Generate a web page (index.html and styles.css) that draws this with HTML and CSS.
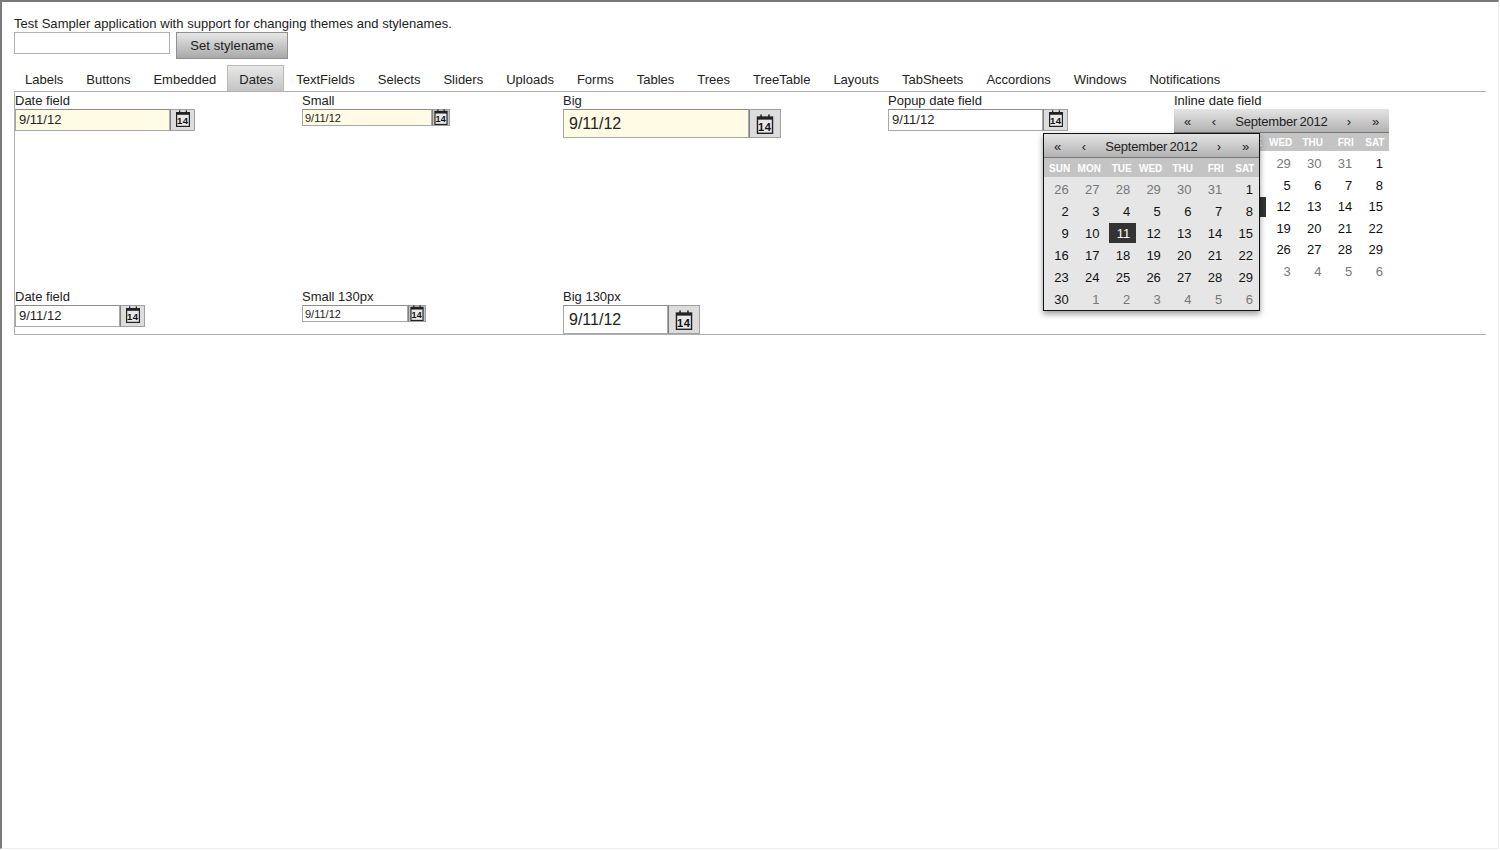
FILE: index.html
```html
<!DOCTYPE html>
<html lang="en">
<head>
    <meta charset="UTF-8">
    <meta name="viewport" content="width=device-width, initial-scale=1.0">
    <title>Test Sampler</title>
    <link rel="stylesheet" href="styles.css">
</head>
<body>
    <!-- Calendar icon, reused by every date field -->
    <svg class="icon-defs">
        <symbol id="cal" viewBox="0 0 16 17">
            <rect x="1.6" y="2.6" width="12.8" height="13.8" fill="#e8e8e8" stroke="#222" stroke-width="1.2"/>
            <rect x="1.6" y="2.6" width="12.8" height="2.2" fill="#222"/>
            <rect x="4" y="0.4" width="1.3" height="3.4" fill="#222"/>
            <rect x="10.7" y="0.4" width="1.3" height="3.4" fill="#222"/>
            <text x="7.8" y="14.3" class="icon-num">14</text>
        </symbol>
    </svg>

    <div class="frame">
        <p class="intro">Test Sampler application with support for changing themes and stylenames.</p>
        <div class="stylename-row">
            <input type="text" class="stylename-input">
            <button class="stylename-btn">Set stylename</button>
        </div>

        <!-- Tabs -->
        <nav class="tabs">
            <span class="tab">Labels</span>
            <span class="tab">Buttons</span>
            <span class="tab">Embedded</span>
            <span class="tab active">Dates</span>
            <span class="tab">TextFields</span>
            <span class="tab">Selects</span>
            <span class="tab">Sliders</span>
            <span class="tab">Uploads</span>
            <span class="tab">Forms</span>
            <span class="tab">Tables</span>
            <span class="tab">Trees</span>
            <span class="tab">TreeTable</span>
            <span class="tab">Layouts</span>
            <span class="tab">TabSheets</span>
            <span class="tab">Accordions</span>
            <span class="tab">Windows</span>
            <span class="tab">Notifications</span>
        </nav>

        <main class="panel">
            <div class="cell">
                <label class="caption">Date field</label>
                <div class="datefield w180 focused">
                    <input type="text" value="9/11/12">
                    <button><svg class="cal"><use href="#cal"/></svg></button>
                </div>
            </div>
            <div class="cell">
                <label class="caption">Small</label>
                <div class="datefield small w148 focused">
                    <input type="text" value="9/11/12">
                    <button><svg class="cal"><use href="#cal"/></svg></button>
                </div>
            </div>
            <div class="cell">
                <label class="caption">Big</label>
                <div class="datefield big w218 focused">
                    <input type="text" value="9/11/12">
                    <button><svg class="cal"><use href="#cal"/></svg></button>
                </div>
            </div>
            <div class="cell">
                <label class="caption">Popup date field</label>
                <div class="datefield w180">
                    <input type="text" value="9/11/12">
                    <button><svg class="cal"><use href="#cal"/></svg></button>
                </div>
            </div>
            <div class="cell">
                <label class="caption">Inline date field</label>
                <div class="calendar inline">
                    <div class="cal-head"><span>«</span><span>‹</span><span class="cal-title">September 2012</span><span>›</span><span>»</span></div>
                    <div class="cal-week"><span>SUN</span><span>MON</span><span>TUE</span><span>WED</span><span>THU</span><span>FRI</span><span>SAT</span></div>
                    <div class="cal-days">
                        <span class="off">26</span><span class="off">27</span><span class="off">28</span><span class="off">29</span><span class="off">30</span><span class="off">31</span><span>1</span>
                        <span>2</span><span>3</span><span>4</span><span>5</span><span>6</span><span>7</span><span>8</span>
                        <span>9</span><span>10</span><span class="sel">11</span><span>12</span><span>13</span><span>14</span><span>15</span>
                        <span>16</span><span>17</span><span>18</span><span>19</span><span>20</span><span>21</span><span>22</span>
                        <span>23</span><span>24</span><span>25</span><span>26</span><span>27</span><span>28</span><span>29</span>
                        <span>30</span><span class="off">1</span><span class="off">2</span><span class="off">3</span><span class="off">4</span><span class="off">5</span><span class="off">6</span>
                    </div>
                </div>
            </div>

            <div class="cell">
                <label class="caption">Date field</label>
                <div class="datefield w130">
                    <input type="text" value="9/11/12">
                    <button><svg class="cal"><use href="#cal"/></svg></button>
                </div>
            </div>
            <div class="cell">
                <label class="caption">Small 130px</label>
                <div class="datefield small w124">
                    <input type="text" value="9/11/12">
                    <button><svg class="cal"><use href="#cal"/></svg></button>
                </div>
            </div>
            <div class="cell">
                <label class="caption">Big 130px</label>
                <div class="datefield big w137">
                    <input type="text" value="9/11/12">
                    <button><svg class="cal"><use href="#cal"/></svg></button>
                </div>
            </div>

            <!-- Open popup of the popup date field -->
            <div class="calendar popup">
                <div class="cal-head"><span>«</span><span>‹</span><span class="cal-title">September 2012</span><span>›</span><span>»</span></div>
                <div class="cal-week"><span>SUN</span><span>MON</span><span>TUE</span><span>WED</span><span>THU</span><span>FRI</span><span>SAT</span></div>
                <div class="cal-days">
                    <span class="off">26</span><span class="off">27</span><span class="off">28</span><span class="off">29</span><span class="off">30</span><span class="off">31</span><span>1</span>
                    <span>2</span><span>3</span><span>4</span><span>5</span><span>6</span><span>7</span><span>8</span>
                    <span>9</span><span>10</span><span class="sel">11</span><span>12</span><span>13</span><span>14</span><span>15</span>
                    <span>16</span><span>17</span><span>18</span><span>19</span><span>20</span><span>21</span><span>22</span>
                    <span>23</span><span>24</span><span>25</span><span>26</span><span>27</span><span>28</span><span>29</span>
                    <span>30</span><span class="off">1</span><span class="off">2</span><span class="off">3</span><span class="off">4</span><span class="off">5</span><span class="off">6</span>
                </div>
            </div>
        </main>
    </div>
</body>
</html>
```

FILE: styles.css
```css
/* Global Styles */
html, body {
    margin: 0;
    padding: 0;
    background-color: #fff;
}

body {
    font-family: "Liberation Sans", Arial, sans-serif;
    font-size: 13px;
    color: #222;
    overflow: hidden;
}

input, button {
    font-family: inherit;
    box-sizing: border-box;
    margin: 0;
}

.icon-defs {
    display: none;
}

.icon-num {
    font-family: "Liberation Sans", Arial, sans-serif;
    font-size: 9.5px;
    font-weight: bold;
    letter-spacing: 0.4px;
    text-anchor: middle;
    fill: #111;
}

/* Window frame */
.frame {
    box-sizing: border-box;
    width: 1499px;
    height: 849px;
    border-top: 2px solid #7a7a7a;
    border-left: 2px solid #7a7a7a;
    border-right: 1px solid #eee;
    border-bottom: 1px solid #eee;
    padding: 14px 12px 0;
}

.intro {
    margin: 0;
    height: 16px;
    line-height: 15px;
    letter-spacing: 0.04px;
}

/* Stylename row */
.stylename-row {
    display: flex;
    align-items: flex-start;
    gap: 6px;
    height: 33px;
}

.stylename-input {
    width: 156px;
    height: 22px;
    border: 1px solid #b0b0b0;
    background-color: #fff;
}

.stylename-btn {
    width: 112px;
    height: 27px;
    padding: 0;
    font-size: 13px;
    letter-spacing: 0.1px;
    color: #222;
    border: 1px solid #909090;
    background: linear-gradient(#e6e6e6, #a9a9a9);
}

/* Tabs */
.tabs {
    display: flex;
    height: 26px;
    width: 1472px;
    border-bottom: 1px solid #b0b0b0;
}

.tab {
    padding: 0 10px 0 11px;
    line-height: 28px;
    border: 1px solid transparent;
    border-bottom: none;
    white-space: nowrap;
}

.tab:first-child {
    margin-left: -1px;
}

.tab.active {
    border-color: #b8b8b8;
    background: linear-gradient(#e8e8e8, #c4c4c4);
}

/* Tab content */
.panel {
    position: relative;
    box-sizing: border-box;
    width: 1472px;
    height: 243px;
    border-left: 1px solid #b0b0b0;
    border-bottom: 1px solid #b0b0b0;
    padding-top: 2px;
    display: grid;
    grid-template-columns: 287px 261px 325px 286px 1fr;
    grid-template-rows: 196px auto;
}

.caption {
    display: block;
    height: 15px;
    line-height: 14px;
}

/* Date field */
.datefield {
    display: flex;
    height: 22px;
}

.datefield input {
    flex: 1;
    min-width: 0;
    height: 100%;
    padding: 0 3px 2px;
    font-size: 13px;
    color: #222;
    background-color: #fff;
    border: 1px solid #a8a8a8;
    border-top-color: #8c8c8c;
    border-radius: 0;
    outline: none;
}

.datefield button {
    display: flex;
    align-items: flex-start;
    justify-content: center;
    width: 25px;
    height: 100%;
    padding: 0;
    border: 1px solid #a0a0a0;
    border-left-color: #808080;
    background-color: #dcdcdc;
}

.datefield .cal {
    width: 16px;
    height: 17px;
}

.datefield.focused input {
    background-color: #fffbe4;
}

.datefield.small {
    height: 17px;
}

.datefield.small input {
    padding: 0 2px;
    font-size: 11px;
}

.datefield.small button {
    width: 18px;
    background-color: #c4c4c4;
}

.datefield.small .cal {
    width: 16px;
    height: 16px;
    margin-top: -1px;
}

.datefield.big {
    height: 29px;
}

.datefield.big input {
    padding: 0 5px;
    font-size: 16px;
}

.datefield.big button {
    align-items: center;
    width: 32px;
}

.datefield.big .cal {
    width: 20px;
    height: 20px;
}

.w180 { width: 180px; }
.w148 { width: 148px; }
.w218 { width: 218px; }
.w130 { width: 130px; }
.w124 { width: 124px; }
.w137 { width: 137px; }

/* Calendar */
.calendar {
    width: 215px;
    text-align: right;
}

.cal-head {
    display: grid;
    grid-template-columns: 27px 26px 1fr 26px 27px;
    height: 23px;
    line-height: 25px;
    text-align: center;
    background: linear-gradient(#e4e4e4, #b2b2b2);
    border-bottom: 1px solid #777;
}

.cal-title {
    letter-spacing: -0.2px;
    word-spacing: -1px;
}

.cal-week {
    display: grid;
    grid-template-columns: repeat(7, 1fr);
    height: 18px;
    line-height: 19px;
    font-size: 10px;
    font-weight: bold;
    color: #fff;
    background-color: #c4c4c4;
}

.cal-week span {
    padding-right: 4.5px;
}

.cal-days {
    display: grid;
    grid-template-columns: repeat(7, 1fr);
    grid-auto-rows: 21.6px;
    padding-top: 2px;
    line-height: 21.6px;
    color: #111;
}

.cal-days span {
    padding-right: 6px;
}

.cal-days .off {
    color: #777;
}

.cal-days .sel {
    margin: 1px 0 1px 3.5px;
    line-height: 19.6px;
    color: #fff;
    background-color: #333;
}

.popup {
    position: absolute;
    left: 1028px;
    top: 41px;
    border: 1px solid #111;
    background-color: #e6e6e6;
    box-shadow: 0 3px 6px rgba(0, 0, 0, 0.4);
}

.popup .cal-week {
    height: 19px;
    line-height: 21px;
}

.popup .cal-days {
    grid-auto-rows: 22px;
    padding-top: 1px;
    line-height: 24px;
}

.popup .cal-days .sel {
    line-height: 22px;
}
```
